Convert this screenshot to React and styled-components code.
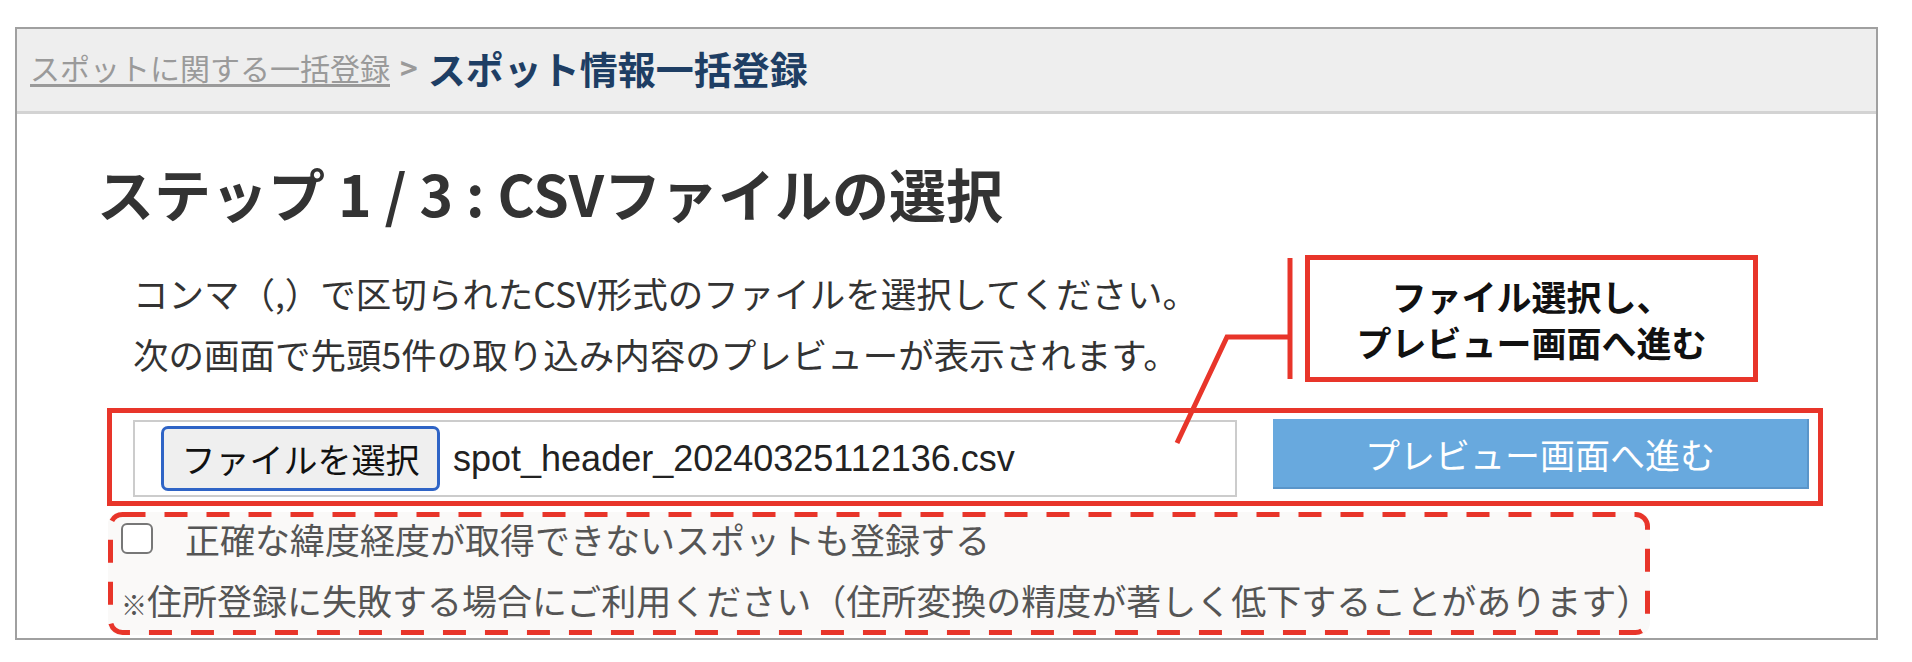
import React from 'react';
import styled, { createGlobalStyle } from 'styled-components';

const GlobalStyle = createGlobalStyle`
    html, body {
        margin: 0;
        padding: 0;
        background: #ffffff;
    }
    body {
        font-family: 'Noto Sans CJK JP', 'Noto Sans', sans-serif;
        color: #333333;
    }
`;

const RED = '#e8352a';

const Page = styled.div`
    padding: 27px 0 0 15px;
`;

const Frame = styled.div`
    position: relative;
    width: 1863px;
    height: 613px;
    box-sizing: border-box;
    border: 2px solid #a0a0a0;
    overflow: hidden;
`;

const Header = styled.div`
    display: flex;
    align-items: center;
    height: 85px;
    padding: 0 0 6px 13px;
    box-sizing: border-box;
    background: #eeeeee;
    border-bottom: 3px solid #d3d3d3;
    white-space: nowrap;
`;

const CrumbLink = styled.a`
    font-size: 30px;
    color: #9a9a9a;
    text-decoration: underline;
    text-underline-offset: 4px;
`;

const CrumbSep = styled.span`
    font-size: 30px;
    font-weight: 700;
    color: #9a9a9a;
    margin: 0 10px;
`;

const CrumbCurrent = styled.span`
    font-size: 38px;
    font-weight: 700;
    color: #1e3e64;
`;

const Content = styled.div`
    display: flex;
    flex-direction: column;
    align-items: flex-start;
`;

const Title = styled.h1`
    margin: 45px 0 0 80px;
    font-size: 57px;
    line-height: 67px;
    font-weight: 700;
    color: #333333;
    white-space: nowrap;
`;

const Lead = styled.p`
    margin: 36px 0 0 116px;
    font-size: 35.5px;
    line-height: 61px;
    color: #333333;
    white-space: nowrap;
`;

const FormRow = styled.div`
    display: flex;
    align-items: flex-start;
    width: 1716px;
    height: 98px;
    box-sizing: border-box;
    margin: 24px 0 0 90px;
    padding: 6px 9px 0 21px;
    border: 5px solid ${RED};
`;

const FileField = styled.div`
    display: flex;
    align-items: center;
    width: 1104px;
    height: 77px;
    margin-top: 1px;
    box-sizing: border-box;
    padding-left: 26px;
    border: 2px solid #cccccc;
    background: #ffffff;
`;

const FileButton = styled.button`
    height: 65px;
    width: 279px;
    box-sizing: border-box;
    border: 3px solid #2f64c6;
    border-radius: 7px;
    background: #efefef;
    font-family: 'Noto Sans CJK JP', sans-serif;
    font-size: 34px;
    color: #111111;
    padding: 0;
`;

const FileName = styled.span`
    margin-left: 13px;
    font-family: 'Liberation Sans', Arial, sans-serif;
    font-size: 36px;
    color: #222222;
`;

const NextButton = styled.button`
    width: 536px;
    height: 70px;
    margin-left: 36px;
    box-sizing: border-box;
    border: none;
    border-right: 2px solid #5a95c9;
    border-bottom: 2px solid #5a95c9;
    background: #68a9de;
    color: #ffffff;
    font-family: 'Noto Sans CJK JP', sans-serif;
    font-size: 35px;
    padding: 0;
`;

const OptionBox = styled.div`
    position: relative;
    width: 1542px;
    height: 123px;
    box-sizing: border-box;
    margin: 6px 0 0 91px;
    padding: 10px 15px 0 13px;
    background: #faf9f8;
    border-radius: 12px;
`;

const DashedEdge = styled.svg`
    position: absolute;
    left: 0;
    top: 0;
    pointer-events: none;
`;

const CheckRow = styled.label`
    display: flex;
    align-items: center;
    height: 32px;
    gap: 32px;
`;

const CheckBox = styled.span`
    display: block;
    width: 32px;
    height: 31px;
    box-sizing: border-box;
    border: 2px solid #777777;
    border-radius: 6px;
    background: #ffffff;
`;

const CheckLabel = styled.span`
    font-size: 35px;
    color: #555555;
    white-space: nowrap;
`;

const Note = styled.div`
    margin-top: 26px;
    font-size: 35px;
    line-height: 40px;
    color: #555555;
    white-space: nowrap;
`;

const NoteMark = styled.span`
    font-size: 26px;
    font-weight: 700;
`;

const Callout = styled.div`
    position: absolute;
    left: 1288px;
    top: 226px;
    width: 453px;
    height: 127px;
    box-sizing: border-box;
    border: 5px solid ${RED};
    background: #ffffff;
    display: flex;
    align-items: center;
    justify-content: center;
    z-index: 2;
`;

const CalloutText = styled.p`
    margin: 0;
    text-align: center;
    font-size: 35px;
    line-height: 46px;
    font-weight: 700;
    color: #111111;
    white-space: nowrap;
`;

const Connector = styled.svg`
    position: absolute;
    left: 1143px;
    top: 221px;
    z-index: 2;
`;

export default function App() {
    return (
        <>
            <GlobalStyle />
            <Page>
                <Frame>
                    <Header>
                        <CrumbLink href="#">スポットに関する一括登録</CrumbLink>
                        <CrumbSep>&gt;</CrumbSep>
                        <CrumbCurrent>スポット情報一括登録</CrumbCurrent>
                    </Header>
                    <Content>
                        <Title>ステップ 1 / 3 : CSVファイルの選択</Title>
                        <Lead>
                            コンマ（,）で区切られたCSV形式のファイルを選択してください。
                            <br />
                            次の画面で先頭5件の取り込み内容のプレビューが表示されます。
                        </Lead>
                        <FormRow>
                            <FileField>
                                <FileButton type="button">ファイルを選択</FileButton>
                                <FileName>spot_header_20240325112136.csv</FileName>
                            </FileField>
                            <NextButton type="button">プレビュー画面へ進む</NextButton>
                        </FormRow>
                        <OptionBox>
                            <DashedEdge width="1542" height="123" viewBox="0 0 1542 123">
                                <rect x="2.5" y="2.5" width="1537" height="118" rx="12" fill="none"
                                    stroke={RED} strokeWidth="5" strokeDasharray="23 19" />
                            </DashedEdge>
                            <CheckRow>
                                <CheckBox />
                                <CheckLabel>正確な緯度経度が取得できないスポットも登録する</CheckLabel>
                            </CheckRow>
                            <Note>
                                <NoteMark>※</NoteMark>住所登録に失敗する場合にご利用ください（住所変換の精度が著しく低下することがあります）
                            </Note>
                        </OptionBox>
                    </Content>
                    <Connector width="140" height="200" viewBox="0 0 140 200">
                        <line x1="130" y1="8" x2="130" y2="129" stroke={RED} strokeWidth="5" />
                        <polyline points="130,87 67,87 17,193" fill="none" stroke={RED} strokeWidth="5" />
                    </Connector>
                    <Callout>
                        <CalloutText>
                            ファイル選択し、
                            <br />
                            プレビュー画面へ進む
                        </CalloutText>
                    </Callout>
                </Frame>
            </Page>
        </>
    );
}
